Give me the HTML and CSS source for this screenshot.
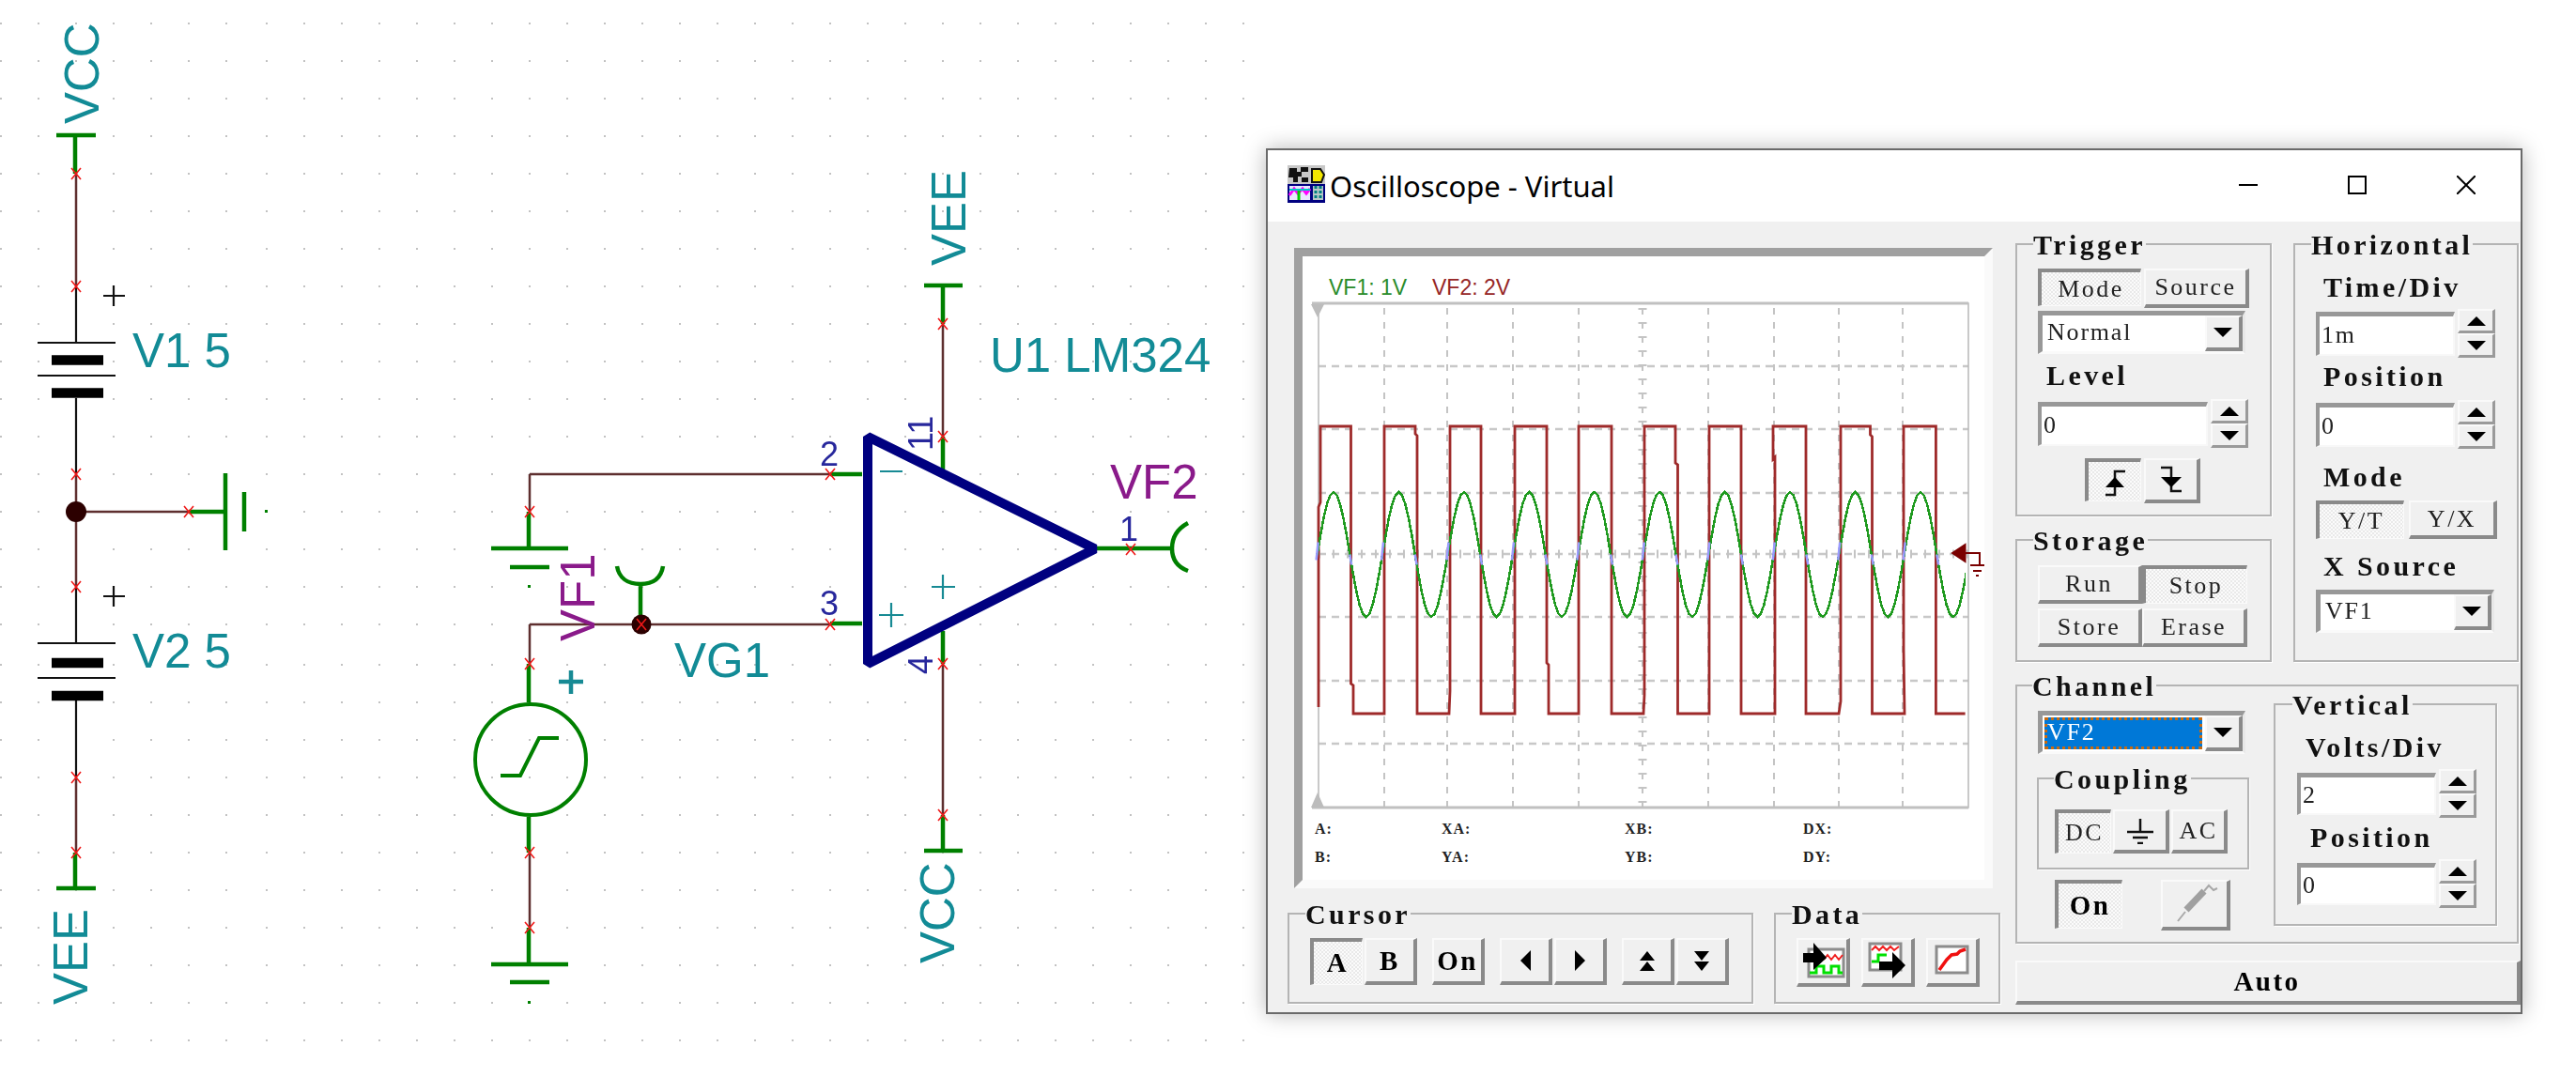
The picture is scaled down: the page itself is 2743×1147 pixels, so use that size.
FILE: index.html
```html
<!DOCTYPE html>
<html lang="en">
<head>
    <meta charset="UTF-8">
    <title>Oscilloscope - Virtual</title>
    <link rel="stylesheet" href="styles.css">
</head>
<body>

<div class="desktop">

    <!-- schematic sheet -->
    <svg class="schematic" width="2743" height="1147" viewBox="0 0 2743 1147">
        <defs>
            <pattern id="dots-a" patternUnits="userSpaceOnUse" x="0" y="24" width="40" height="40"><rect class="dot" width="2" height="2"/></pattern>
            <pattern id="dots-b" patternUnits="userSpaceOnUse" x="283" y="24" width="40" height="40"><rect class="dot" width="2" height="2"/></pattern>
            <pattern id="dots-c" patternUnits="userSpaceOnUse" x="0" y="27" width="40" height="40"><rect class="dot" width="2" height="2"/></pattern>
            <pattern id="dots-d" patternUnits="userSpaceOnUse" x="283" y="27" width="40" height="40"><rect class="dot" width="2" height="2"/></pattern>
            <path id="mark" class="mark" d="M-5 -6L5 6M5 -6L-5 6"/>
        </defs>
        <rect fill="url(#dots-a)" x="0" y="0" width="262" height="690"/>
        <rect fill="url(#dots-b)" x="262" y="0" width="1080" height="690"/>
        <rect fill="url(#dots-c)" x="0" y="690" width="262" height="457"/>
        <rect fill="url(#dots-d)" x="262" y="690" width="1080" height="457"/>

        <!-- V1 / V2 rail -->
        <path class="lead" d="M60 144H102M80 144V185"/>
        <path class="wire" d="M81 185V305"/>
        <path class="black" d="M81 305V365M40 365H123M40 400H123M81 424V505"/>
        <path class="plate" d="M55 383.500H110M55 418.500H110"/>
        <path class="black" d="M110 315H133M121 304V326"/>
        <path class="wire" d="M81 505V625"/>
        <path class="black" d="M81 625V685M40 685H123M40 722H123M81 746V828"/>
        <path class="plate" d="M55 706H110M55 741H110"/>
        <path class="black" d="M110 635H133M121 624V646"/>
        <path class="wire" d="M81 828V908M81 545H201"/>
        <path class="lead" d="M80 908V946M60 946H102M201 545H240M240 504V586"/>
        <path class="lead" d="M260 524V566"/>
        <rect class="lead-dot" x="282" y="543" width="3" height="3"/>
        <circle class="node" cx="81" cy="545" r="11"/>

        <!-- input source -->
        <path class="wire" d="M564 505H884M564 505V545M564 665H884M564 665V707M564 908V988"/>
        <path class="lead" d="M563 545V584M523 584H605M543 604H585"/>
        <rect class="lead-dot" x="562" y="623" width="3" height="3"/>
        <path class="lead" d="M563 707V748M563 870V908M563 988V1027M523 1027H605M543 1046H585"/>
        <rect class="lead-dot" x="562" y="1066" width="3" height="3"/>
        <circle class="lead lead-thin" cx="565" cy="809" r="59"/>
        <path class="lead lead-thin" d="M533 826H554L574 786H595"/>
        <path class="teal-bold" d="M595 726H621M608 714V739"/>
        <path class="lead" d="M682 622V665M657 603C659 615 668 622 682 622C696 622 704 615 706 603"/>
        <circle class="node" cx="683" cy="665" r="10.500"/>

        <!-- op amp -->
        <path class="lead" d="M884 505H918M884 664H918M1004 304V345M984 304H1025M1004 465V500M1004 672V707M1004 868V906M984 906H1025M1165 584H1248M1265 557C1254 563 1248 572 1248 584C1248 596 1254 604 1265 608"/>
        <path class="wire" d="M1004 345V465M1004 707V868"/>
        <path class="opamp" d="M924 465V707L1166 584.500Z"/>
        <path class="teal-thin" d="M937 502H961M936 655H962M949 642V668M992 625H1017M1004 612V638"/>

        <use href="#mark" x="81" y="185"/>
        <use href="#mark" x="81" y="305"/>
        <use href="#mark" x="81" y="505"/>
        <use href="#mark" x="81" y="625"/>
        <use href="#mark" x="81" y="828"/>
        <use href="#mark" x="81" y="908"/>
        <use href="#mark" x="201" y="545"/>
        <use href="#mark" x="564" y="545"/>
        <use href="#mark" x="564" y="707"/>
        <use href="#mark" x="564" y="908"/>
        <use href="#mark" x="564" y="988"/>
        <use href="#mark" x="683" y="665"/>
        <use href="#mark" x="884" y="505"/>
        <use href="#mark" x="884" y="665"/>
        <use href="#mark" x="1004" y="345"/>
        <use href="#mark" x="1004" y="465"/>
        <use href="#mark" x="1004" y="707"/>
        <use href="#mark" x="1004" y="868"/>
        <use href="#mark" x="1204" y="585"/>

        <text class="name" transform="translate(105 132) rotate(-90)">VCC</text>
        <text class="name" x="141" y="391">V1 5</text>
        <text class="name" x="141" y="711">V2 5</text>
        <text class="name" transform="translate(93 1070) rotate(-90)">VEE</text>
        <text class="name" transform="translate(1028 283) rotate(-90)">VEE</text>
        <text class="name" transform="translate(1016 1026) rotate(-90)">VCC</text>
        <text class="name" x="1054" y="396">U1 LM324</text>
        <text class="name" x="718" y="721">VG1</text>
        <text class="probe-name" x="1182" y="531">VF2</text>
        <text class="probe-name" transform="translate(633 683) rotate(-90)">VF1</text>
        <text class="pin" x="873" y="496">2</text>
        <text class="pin" x="873" y="655">3</text>
        <text class="pin" x="1192" y="576">1</text>
        <text class="pin" transform="translate(993 480) rotate(-90)">11</text>
        <text class="pin" transform="translate(993 718) rotate(-90)">4</text>
    </svg>

    <!-- oscilloscope window -->
    <div class="window">
        <div class="titlebar">
            <svg class="app-icon" width="40" height="40" viewBox="0 0 40 40">
                <rect width="40" height="20" fill="#c8c8c8"/>
                <path fill="#111" d="M2 3h8v4h5v5h-4v6H6v-5H1zM14 2h8v5h-8zM15 13h7v5h-7z"/>
                <path fill="#f4e800" stroke="#111" stroke-width="2" d="M26 4h9l4 6-3 8H26z"/>
                <rect y="20" width="40" height="20" fill="#000080"/>
                <rect x="2" y="22" width="22" height="15" fill="#e8e8ff"/>
                <path fill="none" stroke="#f0f" stroke-width="3" d="M2 32L7 25L11 30L16 25L20 30L24 25"/>
                <path fill="none" stroke="#00c8c8" stroke-width="2" d="M2 26H24"/>
                <path fill="none" stroke="#0c0" stroke-width="3" d="M12 27V37"/>
                <rect x="27" y="22" width="11" height="15" fill="#b8c8c8"/>
                <path stroke="#008080" stroke-width="3" stroke-dasharray="3 2" d="M30 22V37M35 22V37"/>
            </svg>
            <span class="title">Oscilloscope - Virtual</span>
            <div class="controls">
                <div class="ctl"><svg width="20" height="20" viewBox="0 0 20 20"><path d="M0 10H20"/></svg></div>
                <div class="ctl"><svg width="20" height="20" viewBox="0 0 20 20"><path d="M1 1H19V19H1Z"/></svg></div>
                <div class="ctl"><svg width="20" height="20" viewBox="0 0 20 20"><path d="M0 0L20 20M20 0L0 20"/></svg></div>
            </div>
        </div>

        <div class="client">
            <div class="left-col">
                <div class="screen">
                    <svg class="scope" width="726" height="664" viewBox="1387 273 726 664">
                        <defs>
                            <clipPath id="plot-clip"><rect x="1400" y="323" width="693" height="537"/></clipPath>
                            <g id="cycle">
                                <path class="sine" d="M0 0L3.500 -20.500L6.900 -39.100L10.400 -53.800L13.900 -63.200L17.400 -66.500L20.800 -63.200L24.300 -53.800L27.800 -39.100L31.300 -20.500L34.700 0L38.200 20.500L41.700 39.100L45.100 53.800L48.600 63.200L52.100 66.500L55.600 63.200L59 53.800L62.500 39.100L66 20.500L69.450 0"/>
                                <path class="sine-mid" d="M-1 6L1 -13M34.700 0L36.500 11"/>
                            </g>
                        </defs>
                        <text class="lbl-vf1" x="1415" y="314">VF1: 1V</text>
                        <text class="lbl-vf2" x="1525" y="314">VF2: 2V</text>

                        <path class="grid-v" d="M1474 328V860M1541 328V860M1611 328V860M1681 328V860M1749 328V860M1819 328V860M1889 328V860M1958 328V860M2026 328V860"/>
                        <path class="grid-h" d="M1404 390H2096M1404 457H2096M1404 525H2096M1404 590H2096M1404 657H2096M1404 725H2096M1404 792H2096"/>
                        <path class="grid-tick" d="M1749 328V860"/>
                        <path class="grid-tick" d="M1404 590H2096"/>
                        <path class="plot-frame" d="M1404 860V323H2096V860Z"/>
                        <path class="plot-edge" d="M1397 323H2096M1397 860H2096"/>
                        <path class="marker" d="M1396 324H1410L1403 338ZM1396 860H1410L1403 844Z"/>

                        <path class="square" d="M1404 753V540L1406 535V454H1438.500V728L1441 730V760H1474V454H1507V462L1509 464V760H1543L1544 736V454H1577V760H1613V454H1647V706L1649 708V760H1681V454H1716V760H1750L1751 740V454H1784V493L1786.500 495V760H1820V454H1854V760H1890V487L1888 489V454H1923V760H1958L1960 747V454H1991.500V463L1993.500 465V760H2028L2027 692V454H2061.400V760H2092.600"/>
                        <g clip-path="url(#plot-clip)">
                            <use href="#cycle" x="1402.600" y="590.500"/>
                            <use href="#cycle" x="1472.050" y="590.500"/>
                            <use href="#cycle" x="1541.500" y="590.500"/>
                            <use href="#cycle" x="1610.950" y="590.500"/>
                            <use href="#cycle" x="1680.400" y="590.500"/>
                            <use href="#cycle" x="1749.850" y="590.500"/>
                            <use href="#cycle" x="1819.300" y="590.500"/>
                            <use href="#cycle" x="1888.750" y="590.500"/>
                            <use href="#cycle" x="1958.200" y="590.500"/>
                            <use href="#cycle" x="2027.650" y="590.500"/>
                        </g>

                        <path class="trig" d="M2080 589L2092 581V597Z"/>
                        <path class="trig-line" d="M2092 589H2108V602M2098 602H2113M2101 608H2110M2104 613H2107"/>

                        <g class="readout">
                            <text x="1400" y="888">A:</text><text x="1535" y="888">XA:</text><text x="1730" y="888">XB:</text><text x="1920" y="888">DX:</text>
                            <text x="1400" y="918">B:</text><text x="1535" y="918">YA:</text><text x="1730" y="918">YB:</text><text x="1920" y="918">DY:</text>
                        </g>
                    </svg>
                </div>

                <div class="bottom-row">
                    <fieldset class="group cursor-group">
                        <legend>Cursor</legend>
                        <div class="btn-row">
                            <button class="btn btn-bold pressed">A</button>
                            <button class="btn btn-bold">B</button>
                            <button class="btn btn-bold btn-on">On</button>
                            <button class="btn btn-pair"><span class="tri tri-left"></span></button>
                            <button class="btn"><span class="tri tri-right"></span></button>
                            <button class="btn btn-pair"><span class="tri tri-up"></span><span class="tri tri-up"></span></button>
                            <button class="btn"><span class="tri tri-down"></span><span class="tri tri-down"></span></button>
                        </div>
                    </fieldset>
                    <fieldset class="group data-group">
                        <legend>Data</legend>
                        <div class="data-row">
                            <button class="btn">
                                <svg width="50" height="44" viewBox="0 0 50 44">
                                    <rect class="ic-frame" x="10" y="9" width="37" height="29"/>
                                    <path class="ic-red" d="M26 20L30 15L34 20L38 15L42 20L46 15"/>
                                    <path class="ic-green" d="M11 34H18V27H26V34H34V27H42V34H46"/>
                                    <path d="M4 13H15V2L29 18L15 31V23H4Z"/>
                                </svg>
                            </button>
                            <button class="btn">
                                <svg width="50" height="44" viewBox="0 0 50 44">
                                    <rect class="ic-frame" x="6" y="3" width="33" height="28"/>
                                    <path class="ic-red" d="M8 10L12 6L16 10L20 6L24 10L28 6L32 10L37 6"/>
                                    <path class="ic-green" d="M8 22H15V15H24"/>
                                    <path d="M16 22H30V12L44 26L30 40V31H16Z"/>
                                </svg>
                            </button>
                            <button class="btn">
                                <svg width="50" height="44" viewBox="0 0 50 44">
                                    <rect class="ic-frame" x="8" y="6" width="33" height="28"/>
                                    <path class="ic-curve" d="M11 31L19 20L24 15L30 14L33 11L39 9"/>
                                </svg>
                            </button>
                        </div>
                    </fieldset>
                </div>
            </div>

            <div class="right-col">
                <fieldset class="group trigger-group">
                    <legend>Trigger</legend>
                    <div class="seg">
                        <button class="btn pressed seg-mode">Mode</button>
                        <button class="btn seg-source">Source</button>
                    </div>
                    <div class="combo combo-wide">
                        <span class="combo-text">Normal</span>
                        <span class="combo-arrow"><span class="tri tri-down"></span></span>
                    </div>
                    <div class="lbl lbl-level">Level</div>
                    <div class="spin spin-wide">
                        <div class="field">0</div>
                        <div class="spin-btns">
                            <span class="spin-btn"><span class="tri tri-up"></span></span>
                            <span class="spin-btn"><span class="tri tri-down"></span></span>
                        </div>
                    </div>
                    <div class="edge-row">
                        <button class="btn pressed edge-btn">
                            <svg width="40" height="40" viewBox="0 0 40 40"><path class="ic-line" d="M10 34H20V9H31"/><path d="M10 26H30L20 15Z"/></svg>
                        </button>
                        <button class="btn edge-btn">
                            <svg width="40" height="40" viewBox="0 0 40 40"><path class="ic-line" d="M9 7H20V32H31"/><path d="M9 17H31L20 28Z"/></svg>
                        </button>
                    </div>
                </fieldset>

                <fieldset class="group storage-group">
                    <legend>Storage</legend>
                    <div class="storage-grid">
                        <button class="btn">Run</button>
                        <button class="btn pressed">Stop</button>
                        <button class="btn">Store</button>
                        <button class="btn">Erase</button>
                    </div>
                </fieldset>

                <fieldset class="group horizontal-group">
                    <legend>Horizontal</legend>
                    <div class="lbl lbl-h">Time/Div</div>
                    <div class="spin spin-narrow">
                        <div class="field">1m</div>
                        <div class="spin-btns">
                            <span class="spin-btn"><span class="tri tri-up"></span></span>
                            <span class="spin-btn"><span class="tri tri-down"></span></span>
                        </div>
                    </div>
                    <div class="lbl lbl-h lbl-pos">Position</div>
                    <div class="spin spin-narrow spin-pos">
                        <div class="field">0</div>
                        <div class="spin-btns">
                            <span class="spin-btn"><span class="tri tri-up"></span></span>
                            <span class="spin-btn"><span class="tri tri-down"></span></span>
                        </div>
                    </div>
                    <div class="lbl lbl-h lbl-mode">Mode</div>
                    <div class="seg seg-yt">
                        <button class="btn pressed">Y/T</button>
                        <button class="btn">Y/X</button>
                    </div>
                    <div class="lbl lbl-h lbl-xsrc">X Source</div>
                    <div class="combo combo-narrow">
                        <span class="combo-text">VF1</span>
                        <span class="combo-arrow"><span class="tri tri-down"></span></span>
                    </div>
                </fieldset>

                <fieldset class="group channel-group">
                    <legend>Channel</legend>
                    <div class="channel-body">
                        <div class="channel-left">
                            <div class="combo combo-wide combo-channel">
                                <span class="combo-text combo-selected">VF2</span>
                                <span class="combo-arrow"><span class="tri tri-down"></span></span>
                            </div>
                            <fieldset class="group coupling-group">
                                <legend>Coupling</legend>
                                <div class="btn-row coupling-row">
                                    <button class="btn pressed">DC</button>
                                    <button class="btn">
                                        <svg width="30" height="28" viewBox="0 0 30 28"><path class="ic-line" d="M15 1V14M1 15H29M7 21H23M12 27H18"/></svg>
                                    </button>
                                    <button class="btn">AC</button>
                                </div>
                            </fieldset>
                            <div class="on-row">
                                <button class="btn btn-bold pressed on-btn">On</button>
                                <button class="btn probe-btn">
                                    <svg width="56" height="46" viewBox="0 0 56 46">
                                        <path class="ic-probe" d="M10 41L18 31"/>
                                        <path class="ic-probe-body" d="M19 29L38 9"/>
                                        <path class="ic-probe" d="M38 9L43 3L48 8L52 6"/>
                                    </svg>
                                </button>
                            </div>
                        </div>
                        <fieldset class="group vertical-group">
                            <legend>Vertical</legend>
                            <div class="lbl lbl-volts">Volts/Div</div>
                            <div class="spin spin-narrow spin-v">
                                <div class="field">2</div>
                                <div class="spin-btns">
                                    <span class="spin-btn"><span class="tri tri-up"></span></span>
                                    <span class="spin-btn"><span class="tri tri-down"></span></span>
                                </div>
                            </div>
                            <div class="lbl lbl-vpos">Position</div>
                            <div class="spin spin-narrow spin-v spin-v2">
                                <div class="field">0</div>
                                <div class="spin-btns">
                                    <span class="spin-btn"><span class="tri tri-up"></span></span>
                                    <span class="spin-btn"><span class="tri tri-down"></span></span>
                                </div>
                            </div>
                        </fieldset>
                    </div>
                </fieldset>

                <button class="btn btn-bold auto-btn">Auto</button>
            </div>
        </div>
    </div>
</div>

</body>
</html>
```

FILE: styles.css
```css
* {
    box-sizing: border-box;
}

body {
    margin: 0;
    background: #fff;
    font-family: "Liberation Sans", Arial, sans-serif;
}

.desktop {
    position: relative;
    width: 2743px;
    height: 1147px;
    overflow: hidden;
}

/* schematic sheet */
.schematic {
    display: block;
    filter: blur(0.5px);
}

.dot { fill: #c2c2c2; }
.wire { fill: none; stroke: #5e2f2f; stroke-width: 2.5; }
.lead { fill: none; stroke: #008000; stroke-width: 4.5; }
.lead-thin { stroke-width: 4; }
.lead-dot { fill: #008000; }
.black { fill: none; stroke: #111; stroke-width: 2.2; }
.plate { fill: none; stroke: #000; stroke-width: 10.5; }
.node { fill: #2c0000; }
.mark { fill: none; stroke: #f01818; stroke-width: 1.6; }
.opamp { fill: none; stroke: #000080; stroke-width: 10; stroke-linejoin: bevel; }
.teal-thin { fill: none; stroke: #178a94; stroke-width: 2.2; }
.teal-bold { fill: none; stroke: #178a94; stroke-width: 4.5; }

.name { fill: #128b96; font-size: 51px; }
.probe-name { fill: #8a1a8a; font-size: 51px; }
.pin { fill: #27279c; font-size: 36px; }

/* window */
.window {
    position: absolute;
    left: 1348px;
    top: 158px;
    width: 1338px;
    height: 922px;
    border: 2px solid #6a6a6a;
    background: #f0f0f0;
    box-shadow: 0 0 22px rgba(0, 0, 0, 0.28);
    display: flex;
    flex-direction: column;
}

.titlebar {
    height: 76px;
    flex: none;
    background: #fff;
    display: flex;
    align-items: center;
    padding-left: 21px;
}

.app-icon {
    flex: none;
    margin-top: -4px;
}

.title {
    margin-left: 5px;
    font-family: "Noto Sans", sans-serif;
    font-size: 31px;
    color: #000;
}

.controls {
    margin-left: auto;
    display: flex;
}

.ctl {
    width: 116px;
    display: flex;
    justify-content: center;
    margin-top: -2px;
}

.ctl path {
    fill: none;
    stroke: #000;
    stroke-width: 2;
}

.client {
    flex: 1;
    display: flex;
    gap: 16px;
    padding-left: 21px;
    filter: blur(0.5px);
}

.left-col {
    width: 759px;
    flex: none;
}

/* scope display */
.screen {
    width: 744px;
    height: 682px;
    margin: 28px 0 0 7px;
    border: 9px solid;
    border-color: #a0a0a0 #fafafa #fafafa #a0a0a0;
    background: #fff;
}

.scope {
    display: block;
}

.lbl-vf1 { fill: #2a8c2a; font-size: 23px; }
.lbl-vf2 { fill: #962626; font-size: 23px; }

.grid-v { fill: none; stroke: #c4c4c4; stroke-width: 2; stroke-dasharray: 7 8; }
.grid-h { fill: none; stroke: #c8c8c8; stroke-width: 2.5; stroke-dasharray: 8 6; }
.grid-tick { fill: none; stroke: #c4c4c4; stroke-width: 9; stroke-dasharray: 2 13; }
.plot-frame { fill: none; stroke: #b8b8b8; stroke-width: 1.5; }
.plot-edge { fill: none; stroke: #c0c0c0; stroke-width: 3; }
.marker { fill: #bcbcbc; }

.square { fill: none; stroke: #9e2a2a; stroke-width: 2.8; }
.sine { fill: none; stroke: #1f9a1f; stroke-width: 2.5; shape-rendering: crispEdges; }
.sine-mid { fill: none; stroke: #9a9aff; stroke-width: 2.5; }
.trig { fill: #7a0000; stroke: #7a0000; stroke-width: 3; }
.trig-line { fill: none; stroke: #7a0000; stroke-width: 2; }

.readout text {
    font-family: "Liberation Serif", serif;
    font-weight: bold;
    font-size: 16px;
    letter-spacing: 1px;
    fill: #222;
}

/* group boxes */
.group {
    margin: 0;
    padding: 0;
    min-width: 0;
    border: 2px solid #b4b4b4;
    box-shadow: 1px 1px 0 #fff;
}

.group legend {
    margin-left: -5px;
    padding: 0;
    height: 24px;
    font-family: "Liberation Serif", serif;
    font-weight: bold;
    font-size: 30px;
    letter-spacing: 3.400px;
    line-height: 26px;
    color: #111;
}

/* buttons */
.btn {
    margin: 0;
    padding: 0;
    display: flex;
    align-items: center;
    justify-content: center;
    background: #f0f0f0;
    border-style: solid;
    border-width: 2px 4px 4px 2px;
    border-color: #fafafa #8a8a8a #8a8a8a #fafafa;
    font-family: "Liberation Serif", serif;
    font-size: 26px;
    letter-spacing: 2.500px;
    line-height: 1;
    color: #222;
}

.btn.pressed {
    border-width: 4px 1px 1px 4px;
    border-color: #8a8a8a #fafafa #fafafa #8a8a8a;
    background: repeating-conic-gradient(#e9e9e9 0 25%, #fbfbfb 0 50%) 0 0 / 4px 4px;
}

.btn-bold {
    font-weight: bold;
    font-size: 29px;
    color: #000;
}

.tri {
    display: block;
    width: 0;
    height: 0;
    border-style: solid;
    border-color: transparent;
}

.tri-up { border-width: 0 10px 10px; border-bottom-color: #000; }
.tri-down { border-width: 10px 10px 0; border-top-color: #000; }
.tri-left { border-width: 11px 11px 11px 0; border-right-color: #000; }
.tri-right { border-width: 11px 0 11px 11px; border-left-color: #000; }

.btn-row {
    display: flex;
    align-items: flex-start;
    gap: 2px;
}

.btn-row .btn {
    width: 56px;
    height: 50px;
}

.btn-row .tri + .tri { margin-top: 1px; }
.btn-row .tri-up, .btn-row .tri-down { border-left-width: 8px; border-right-width: 8px; }
.btn-row .btn { flex-direction: column; }

.btn-on { margin-left: 14px; margin-right: 14px; }
.btn-pair + .btn { margin-right: 14px; }

/* bottom row */
.bottom-row {
    display: flex;
    gap: 22px;
    margin-top: 15px;
}

.cursor-group {
    width: 496px;
    height: 108px;
    padding: 14px 0 0 22px;
}

.data-group {
    width: 241px;
    height: 108px;
    padding: 14px 0 0 22px;
}

.data-row {
    display: flex;
    gap: 12px;
}

.data-row .btn {
    width: 57px;
    height: 52px;
}

.ic-frame { fill: #fff; stroke: #8c8c8c; stroke-width: 3; }
.ic-red { fill: none; stroke: #f02020; stroke-width: 2; }
.ic-green { fill: none; stroke: #00e000; stroke-width: 3; }
.ic-curve { fill: none; stroke: #f01010; stroke-width: 3.5; }
.ic-line { fill: none; stroke: #111; stroke-width: 2.5; }
.ic-probe { fill: none; stroke: #a8a8a8; stroke-width: 2; }
.ic-probe-body { fill: none; stroke: #a0a0a0; stroke-width: 7; }

/* right column */
.right-col {
    width: 538px;
    flex: none;
    margin-top: 12px;
    display: grid;
    grid-template-columns: 273px 240px;
    grid-template-rows: 302px 142px 287px 47px;
    column-gap: 23px;
    row-gap: 13px;
}

.trigger-group {
    padding: 14px 0 0 22px;
}

.storage-group {
    grid-column: 1;
    grid-row: 2;
    padding: 15px 0 0 22px;
}

.horizontal-group {
    grid-column: 2;
    grid-row: 1 / 3;
    padding: 22px 0 0 22px;
}

.channel-group {
    grid-column: 1 / 3;
    grid-row: 3;
    width: 536px;
}

.channel-group > legend { margin-left: 16px; }

.auto-btn {
    grid-column: 1 / 3;
    grid-row: 4;
    margin-top: 5px;
    height: 47px;
    width: 538px;
}

.seg {
    display: flex;
    align-items: flex-start;
    gap: 3px;
}

.seg-mode { width: 110px; height: 40px; }
.seg-source { width: 112px; height: 42px; }

.seg-yt { margin-top: 13px; gap: 5px; }
.seg-yt .btn { height: 41px; width: 94px; }

/* combo boxes */
.combo {
    display: flex;
    align-items: stretch;
    height: 46px;
    border-style: solid;
    border-width: 5px 3px 3px 5px;
    border-color: #989898 #e8e8e8 #fafafa #989898;
    background: #fff;
}

.combo-wide { width: 221px; margin-top: 3px; }
.combo-narrow { width: 190px; margin-top: 13px; }

.combo-text {
    flex: 1;
    padding-left: 5px;
    font-family: "Liberation Serif", serif;
    font-size: 26px;
    letter-spacing: 1.800px;
    line-height: 36px;
    color: #222;
}

.combo-arrow {
    flex: none;
    width: 40px;
    display: flex;
    align-items: center;
    justify-content: center;
    background: #f0f0f0;
    border-style: solid;
    border-width: 2px 4px 4px 2px;
    border-color: #fafafa #8a8a8a #8a8a8a #fafafa;
}

.combo-channel { margin-top: 15px; }

.combo-selected {
    margin: 2px 3px 2px 2px;
    padding-left: 0;
    background: #0078d7;
    border: 3px dotted #c86a10;
    color: #fff;
    line-height: 26px;
}

/* spinners */
.spin {
    display: flex;
    align-items: center;
    gap: 3px;
}

.field {
    height: 47px;
    border-style: solid;
    border-width: 5px 2px 2px 4px;
    border-color: #989898 #f8f8f8 #f8f8f8 #989898;
    background: #fff;
    padding-left: 2px;
    font-family: "Liberation Serif", serif;
    font-size: 26px;
    letter-spacing: 1.800px;
    line-height: 40px;
    color: #222;
}

.spin-wide { margin-top: 13px; }
.spin-wide .field { width: 181px; }
.spin-narrow { margin-top: 11px; }
.spin-narrow .field { width: 148px; }
.spin-pos { margin-top: 13px; }

.spin-btns {
    width: 40px;
    flex: none;
    display: flex;
    flex-direction: column;
}

.spin-btn {
    height: 26px;
    display: flex;
    align-items: center;
    justify-content: center;
    background: #f0f0f0;
    border-style: solid;
    border-width: 2px 3px 3px 2px;
    border-color: #fafafa #9a9a9a #9a9a9a #fafafa;
}

/* bold captions */
.lbl {
    font-family: "Liberation Serif", serif;
    font-weight: bold;
    font-size: 30px;
    letter-spacing: 3.400px;
    line-height: 24px;
    height: 24px;
    color: #111;
}

.lbl-level { margin: 11px 0 0 9px; }
.lbl-h { margin-left: 8px; }
.lbl-pos { margin-top: 8px; }
.lbl-mode { margin-top: 18px; }
.lbl-xsrc { margin-top: 17px; }

.edge-row {
    display: flex;
    gap: 3px;
    margin: 11px 0 0 50px;
}

.edge-btn { width: 60px; height: 48px; }
.edge-btn.pressed { height: 46px; }

.storage-grid {
    display: grid;
    grid-template-columns: 111px 112px;
    grid-auto-rows: 41px;
    row-gap: 5px;
}

/* channel box */
.channel-body {
    display: flex;
    align-items: flex-start;
}

.channel-left {
    width: 273px;
    flex: none;
    padding-left: 22px;
}

.channel-left .combo-wide { margin-top: 15px; }

.coupling-group {
    width: 226px;
    height: 109px;
    margin: 14px 0 0 -1px;
    padding: 21px 0 0 17px;
}

.coupling-group legend { margin-left: -1px; }

.coupling-row .btn { width: 60px; height: 47px; }
.coupling-row { gap: 2px; }

.on-row {
    display: flex;
    align-items: flex-start;
    margin: 11px 0 0 18px;
}

.on-btn { width: 72px; height: 52px; }
.probe-btn { width: 74px; height: 54px; margin-left: 41px; }

.vertical-group {
    width: 238px;
    height: 248px;
    margin-top: -4px;
    padding: 22px 0 0 23px;
}

.lbl-volts { margin-left: 9px; }
.lbl-vpos { margin: 9px 0 0 14px; }
.spin-v .field { height: 45px; line-height: 38px; }
.spin-v .spin-btn { height: 26px; }
.spin-v2 { margin-top: 11px; }
```
